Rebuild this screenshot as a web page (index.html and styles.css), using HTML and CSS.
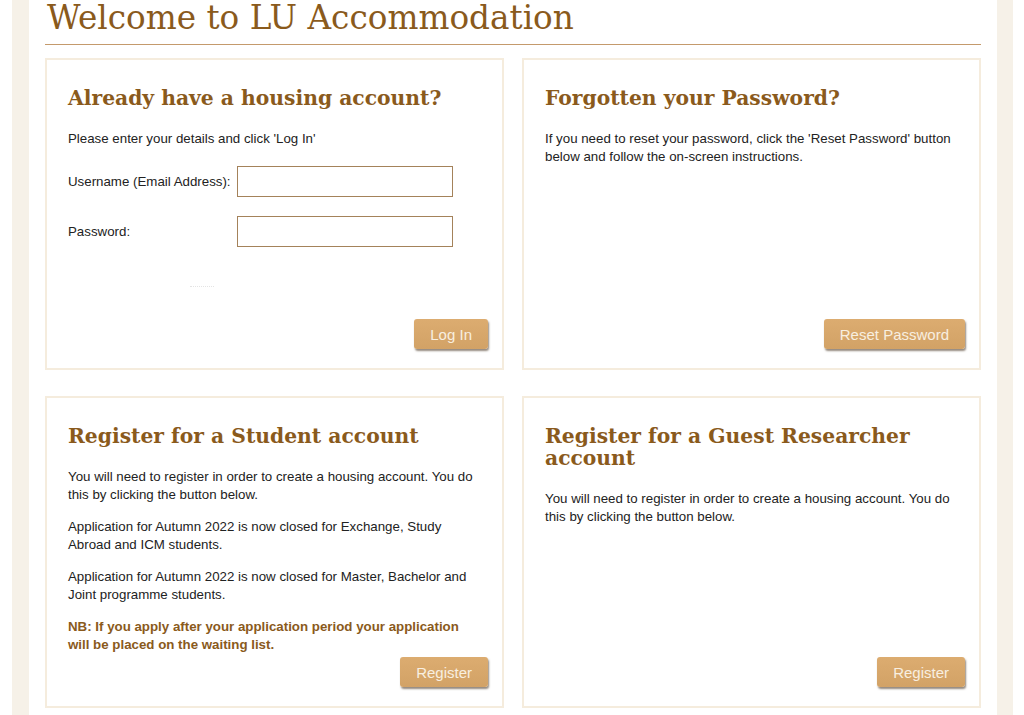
FILE: index.html
```html
<!DOCTYPE html>
<html lang="en">
<head>
  <meta charset="UTF-8" />
  <title>LU Accommodation</title>
  <link rel="stylesheet" href="styles.css">
</head>
<body>
  <div class="wrap">
    <main class="content">
      <h1 class="page-title">Welcome to LU Accommodation</h1>

      <div class="panels">
        <section class="panel">
          <h2>Already have a housing account?</h2>
          <p>Please enter your details and click 'Log In'</p>
          <form class="login-form">
            <div class="form-row">
              <label for="username">Username (Email Address):</label>
              <input type="text" id="username" />
            </div>
            <div class="form-row">
              <label for="password">Password:</label>
              <input type="password" id="password" />
            </div>
            <div class="captcha"></div>
          </form>
          <div class="button-group">
            <button type="button">Log In</button>
          </div>
        </section>

        <section class="panel">
          <h2>Forgotten your Password?</h2>
          <p>If you need to reset your password, click the 'Reset Password' button below and follow the on-screen instructions.</p>
          <div class="button-group">
            <button type="button">Reset Password</button>
          </div>
        </section>

        <section class="panel">
          <h2>Register for a Student account</h2>
          <p>You will need to register in order to create a housing account. You do this by clicking the button below.</p>
          <p>Application for Autumn 2022 is now closed for Exchange, Study Abroad and ICM students.</p>
          <p>Application for Autumn 2022 is now closed for Master, Bachelor and Joint programme students.</p>
          <p class="notice">NB: If you apply after your application period your application will be placed on the waiting list.</p>
          <div class="button-group">
            <button type="button">Register</button>
          </div>
        </section>

        <section class="panel">
          <h2>Register for a Guest Researcher account</h2>
          <p>You will need to register in order to create a housing account. You do this by clicking the button below.</p>
          <div class="button-group">
            <button type="button">Register</button>
          </div>
        </section>
      </div>
    </main>
  </div>
</body>
</html>
```

FILE: styles.css
```css
body {
  margin: 0;
  padding: 0;
  background: #fff;
  font-family: "Liberation Sans", Arial, sans-serif;
  font-size: 13.3px;
  color: #222;
}

.wrap {
  margin: 0 11px 0 12px;
  padding: 0 16px 0 17px;
  background: #f6f1e8;
  min-height: 715px;
}

.content {
  background: #fff;
  padding: 0 16px 20px;
}

.page-title {
  margin: -5px 0 0;
  padding: 0 0 3px 2px;
  font-family: "DejaVu Serif", Georgia, serif;
  font-weight: normal;
  font-size: 32.7px;
  line-height: 46px;
  color: #8a5a1c;
  border-bottom: 1px solid #c49a6c;
}

.panels {
  display: grid;
  grid-template-columns: 1fr 1fr;
  column-gap: 18px;
  row-gap: 26px;
  margin-top: 13px;
}

.panel {
  display: flex;
  flex-direction: column;
  min-height: 312px;
  box-sizing: border-box;
  border: 2px solid #f5ecdd;
  padding: 27px 14px 19px 21px;
}

.panel h2 {
  margin: 0 0 21px;
  font-family: "DejaVu Serif", Georgia, serif;
  font-weight: bold;
  font-size: 20.3px;
  line-height: 22px;
  color: #8a5a1c;
}

.panel p {
  margin: 0 0 14px;
  line-height: 18px;
  padding-right: 8px;
}

.panel .notice {
  color: #8a5a1c;
  font-weight: bold;
  margin-bottom: 3px;
}

.login-form {
  margin-top: 4px;
}

.form-row {
  display: flex;
  align-items: center;
  margin-bottom: 19px;
}

.form-row label {
  width: 169px;
}

.form-row input {
  width: 216px;
  height: 31px;
  box-sizing: border-box;
  border: 1px solid #a4825a;
  padding: 4px;
}

.captcha {
  width: 24px;
  margin: 39px 0 0 122px;
  border-top: 1px dotted #e4e4e4;
}

.button-group {
  margin-top: auto;
  text-align: right;
}

.button-group button {
  font-family: "Liberation Sans", Arial, sans-serif;
  font-size: 15px;
  color: #f8efe0;
  background: linear-gradient(#dcac70, #d2a266);
  border: none;
  border-radius: 3px;
  height: 30px;
  padding: 0 16px;
  box-shadow: 1px 2px 2px rgba(60, 40, 20, 0.55);
  cursor: pointer;
}
```
